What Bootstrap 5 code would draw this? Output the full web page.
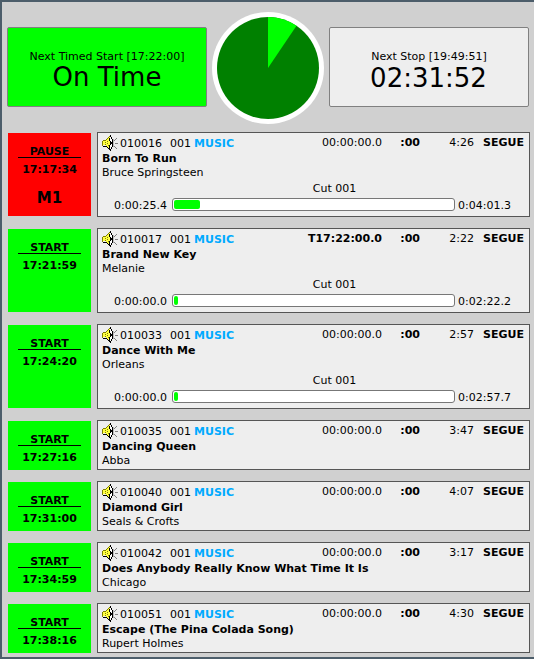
<!DOCTYPE html>
<html lang="en">
<head>
<meta charset="utf-8">
<meta name="viewport" content="width=device-width, initial-scale=1">
<title>Sound Panel Log</title>
<link href="https://cdn.jsdelivr.net/npm/bootstrap@5.3.0/dist/css/bootstrap.min.css" rel="stylesheet">
<style>
body{font-family:"DejaVu Sans",sans-serif;font-size:11px;line-height:13px;color:#000;background:#d0d0d0;overflow:hidden}
.frame{height:659px;border:solid #4c5d6a;border-width:2px 0 2px 2px;background:#d0d0d0}
.head{padding:8px 5px 0;height:130px}
.clockbox{width:200px;height:80px;margin-top:17px;border:1px solid #808080;border-radius:2px;background:#eee;padding-top:22px}
.clockbox .big{font-size:26px;line-height:30px;margin-top:-1px}
.clockbox .stop{margin-top:0;padding-right:1px}
.clockbox.ready{background:#0f0}
.pie{width:112px;height:112px;margin:2px 5px 0}
.entries{padding:0 4px 0 6px;row-gap:11px}
.cue{width:83px;margin-top:1px;padding:12px 10px 0;background:#0f0}
.tall .cue{height:83px}
.cue.paused{background:#f00}
.cue .state{border-bottom:1px solid #000;height:13px}
.cue .at{margin-top:5px}
.cue .machine{font-size:15px;line-height:18px;margin-top:13px}
.event{width:433px;height:50px;margin-left:6px;border:1px solid #555;background:#eee}
.tall .event{height:85px}
.short .cue{height:49px}
.topline{height:19px;padding:4px 5px 0 4px}
.spk{width:16px;height:16px;margin:-2px 2px 0 0}
.cart{width:50px}.cutno{width:24px}
.grp{color:#0af}
.timing{margin-top:-1px}
.sched{width:90px}.talk{width:38px}.len{width:54px}.trans{width:50px}
.name{padding-left:4px;height:14px}
.artist{padding-left:4px}
.cutlabel{margin-top:3px;padding-left:42px}
.play{height:13px;margin-top:4px}
.play .pos{width:69px}
.track{width:283px;height:13px;margin:-1px 3px 0 5px;border:1px solid #777;border-radius:3px;background:#fff;padding:1px}
.fill{height:9px;border-radius:2px;background:#0f0}
</style>
<script src="https://cdn.jsdelivr.net/npm/bootstrap@5.3.0/dist/js/bootstrap.bundle.min.js"></script>
</head>
<body>
<svg class="d-none"><defs><g id="speaker" shape-rendering="crispEdges">
<path fill="#fff" d="M8 2h1v2h1v8h-1v2h-1z"/>
<path fill="#ffff40" d="M1 6h3v-1h1v-1h1v-1h1v-1h1v12h-1v-1h-1v-1h-1v-1h-1v-1h-3z"/>
<path fill="#808000" d="M0 6h1v5h-1zM1 5h3v1h-3zM4 4h1v1h-1zM5 3h1v1h-1zM6 2h1v1h-1zM7 1h1v1h-1zM3 7h1v1h-1zM5 6h1v1h-1zM5 8h1v1h-1zM3 9h1v1h-1zM6 10h1v1h-1z"/>
<path fill="#000" d="M8 0h1v2h-1zM9 2h1v2h-1zM10 4h1v8h-1zM9 12h1v2h-1zM8 14h1v2h-1zM7 3h1v3h-1zM7 10h1v4h-1zM8 6h1v4h-1zM9 7h1v2h-1zM7 14h1v1h-1zM6 13h1v1h-1zM5 12h1v1h-1zM4 11h1v1h-1zM1 11h3v1h-3z"/>
<path fill="#bbb" d="M11 4h1v8h-1z"/>
<path fill="#808080" d="M13 8h3v1h-3zM12 5h1v1h-1zM13 4h1v1h-1zM14 3h1v1h-1zM12 11h1v1h-1zM13 12h1v1h-1zM14 13h1v1h-1z"/>
</g></defs></svg>
<main class="frame">
<header class="head d-flex align-items-start">
<section class="clockbox ready text-center"><div>Next Timed Start [17:22:00]</div><div class="big">On Time</div></section>
<svg class="pie" viewBox="0 0 112 112"><circle cx="56" cy="56" r="56" fill="#fff"/><circle cx="56" cy="56" r="51" fill="#008000"/><path d="M56 56V5A51 51 0 0 1 84.5 13.7z" fill="#0f0"/></svg>
<section class="clockbox text-center"><div>Next Stop [19:49:51]</div><div class="big stop">02:31:52</div></section>
</header>
<div class="entries d-flex flex-column" id="entries"></div>
</main>
<script>
const log=[
['PAUSE','17:17:34','010016','Born To Run','Bruce Springsteen','00:00:00.0','4:26','0:00:25.4','0:04:01.3',26],
['START','17:21:59','010017','Brand New Key','Melanie','T17:22:00.0','2:22','0:00:00.0','0:02:22.2',4],
['START','17:24:20','010033','Dance With Me','Orleans','00:00:00.0','2:57','0:00:00.0','0:02:57.7',4],
['START','17:27:16','010035','Dancing Queen','Abba','00:00:00.0','3:47'],
['START','17:31:00','010040','Diamond Girl','Seals &amp; Crofts','00:00:00.0','4:07'],
['START','17:34:59','010042','Does Anybody Really Know What Time It Is','Chicago','00:00:00.0','3:17'],
['START','17:38:16','010051','Escape (The Pina Colada Song)','Rupert Holmes','00:00:00.0','4:30']];
document.getElementById('entries').innerHTML=log.map(([state,at,cart,name,artist,sched,len,pos,left,w])=>`
<article class="d-flex align-items-start ${pos?'tall':'short'}">
<div class="cue fw-bold text-center ${state==='PAUSE'?'paused':''}"><div class="state">${state}</div><div class="at">${at}</div>${state==='PAUSE'?'<div class="machine">M1</div>':''}</div>
<div class="event">
<div class="topline d-flex align-items-start"><svg class="spk flex-shrink-0" viewBox="0 0 16 16"><use href="#speaker"/></svg><span class="cart">${cart}</span><span class="cutno">001</span><span class="grp fw-bold">MUSIC</span>
<div class="timing d-flex ms-auto text-end"><span class="sched ${sched[0]==='T'?'fw-bold':''}">${sched}</span><span class="talk fw-bold">:00</span><span class="len">${len}</span><span class="trans fw-bold">SEGUE</span></div></div>
<div class="name fw-bold text-nowrap">${name}</div><div class="artist">${artist}</div>
${pos?`<div class="cutlabel text-center">Cut 001</div><div class="play d-flex"><span class="pos text-end">${pos}</span><div class="track"><div class="fill" style="width:${w}px"></div></div><span>${left}</span></div>`:''}
</div></article>`).join('');
</script>
</body>
</html>
